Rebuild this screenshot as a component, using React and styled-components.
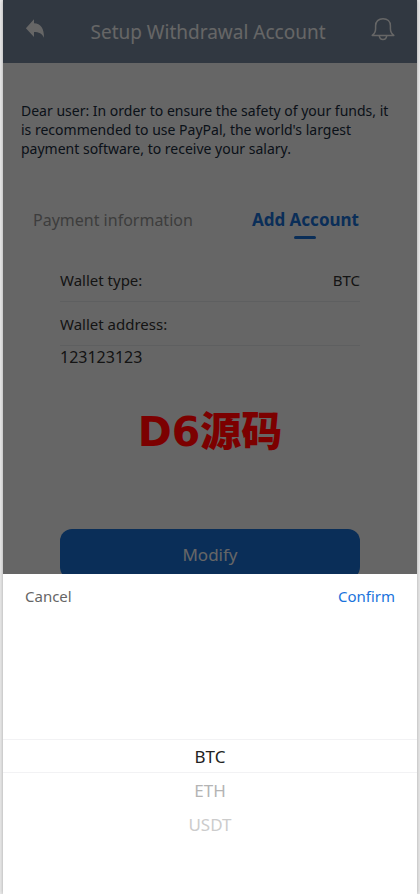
import React, { useState } from 'react';
import styled, { createGlobalStyle } from 'styled-components';

const wallets = ['BTC', 'ETH', 'USDT'];

function App() {
    const [tab, setTab] = useState('add');
    const [wallet, setWallet] = useState('BTC');
    const [address, setAddress] = useState('123123123');

    return (
        <>
            <GlobalStyle />
            <Page>
                <Header>
                    <IconButton aria-label="Back">
                        <svg width="20" height="20" viewBox="0 0 20 20" fill="currentColor">
                            <path d="M9 .3v4c6.8.4 10 4.9 10 14.4-2-4.2-5-5.6-10-5.6v4.9L.9 9.2z" />
                        </svg>
                    </IconButton>
                    <Title>Setup Withdrawal Account</Title>
                    <IconButton aria-label="Notifications">
                        <svg width="24" height="24" viewBox="0 0 24 24" fill="none" stroke="currentColor" strokeWidth="1.5" strokeLinejoin="round">
                            <path d="M1.2 18.4h21.6c-2.4-1.8-3.4-3.9-3.4-6.7V8.8C19.4 4.5 16.4 1.7 12 1.7S4.6 4.5 4.6 8.8v2.9c0 2.8-1 4.9-3.4 6.7z" />
                            <path d="M8.3 18.8c.3 2.4 1.7 3.6 3.7 3.6s3.4-1.2 3.7-3.6" />
                        </svg>
                    </IconButton>
                </Header>
                <Notice>
                    Dear user: In order to ensure the safety of your funds, it is recommended to use PayPal,
                    the world's largest payment software, to receive your salary.
                </Notice>
                <Tabs role="tablist">
                    <Tab role="tab" $active={tab === 'info'} aria-selected={tab === 'info'} onClick={() => setTab('info')}>
                        Payment information
                    </Tab>
                    <Tab role="tab" $active={tab === 'add'} aria-selected={tab === 'add'} onClick={() => setTab('add')}>
                        Add Account
                    </Tab>
                </Tabs>
                <Form onSubmit={(e) => e.preventDefault()}>
                    <Row>
                        <label htmlFor="wallet-type">Wallet type:</label>
                        <TypeButton type="button" id="wallet-type">{wallet}</TypeButton>
                    </Row>
                    <Row>
                        <label htmlFor="wallet-address">Wallet address:</label>
                    </Row>
                    <AddressInput
                        id="wallet-address"
                        value={address}
                        onChange={(e) => setAddress(e.target.value)}
                    />
                    <Submit type="submit">Modify</Submit>
                </Form>
                <Mask />
                <Watermark>D6<span>源码</span></Watermark>
                <Sheet>
                    <Toolbar>
                        <SheetButton>Cancel</SheetButton>
                        <SheetButton $primary>Confirm</SheetButton>
                    </Toolbar>
                    <Picker role="radiogroup" aria-label="Wallet">
                        {wallets.map((name, i) => (
                            <Option key={name} $selected={wallet === name} $far={i === 2}>
                                <input
                                    type="radio"
                                    name="wallet"
                                    checked={wallet === name}
                                    onChange={() => setWallet(name)}
                                />
                                {name}
                            </Option>
                        ))}
                    </Picker>
                </Sheet>
            </Page>
        </>
    );
}

const GlobalStyle = createGlobalStyle`
    * {
        box-sizing: border-box;
    }

    body {
        margin: 0;
        background: #ebebeb;
        font-family: 'Noto Sans', 'Noto Sans CJK SC', sans-serif;
        font-size: 15px;
        color: #333;
    }

    button, input {
        font: inherit;
        color: inherit;
        border: 0;
        padding: 0;
        background: none;
    }
`;

const Page = styled.main`
    position: relative;
    min-height: 100vh;
    margin: 0 3px;
    background: #fff;
    box-shadow: 0 0 4px rgba(0, 0, 0, 0.3);
    overflow: hidden;
`;

const Header = styled.header`
    display: flex;
    align-items: center;
    justify-content: space-between;
    height: 63px;
    padding: 0 22px;
    background: #7a8ca2;
    color: #fff;
`;

const IconButton = styled.button`
    display: flex;
    align-items: center;
    justify-content: center;
    height: 24px;
    margin-bottom: 6px;
`;

const Title = styled.h1`
    margin: 0;
    font-size: 19px;
    font-weight: 400;
`;

const Notice = styled.p`
    margin: 38px 18px 0;
    font-size: 14px;
    line-height: 19px;
    color: #1b2d40;
`;

const Tabs = styled.div`
    display: flex;
    justify-content: space-between;
    margin-top: 42px;
    padding: 0 58px 0 30px;
`;

const Tab = styled.button`
    height: 40px;
    font-size: ${({ $active }) => ($active ? '17px' : '16px')};
    line-height: 38px;
    font-weight: ${({ $active }) => ($active ? 700 : 400)};
    color: ${({ $active }) => ($active ? '#1973dc' : '#999')};

    &::after {
        content: '';
        display: block;
        width: 22px;
        height: 3px;
        margin: -3px auto 0;
        border-radius: 2px;
        background: ${({ $active }) => ($active ? '#1973dc' : 'transparent')};
    }
`;

const Form = styled.form`
    margin: 18px 57px 0;
`;

const Row = styled.div`
    display: flex;
    align-items: center;
    justify-content: space-between;
    height: 44px;
    border-bottom: 1px solid #ebedf0;
`;

const TypeButton = styled.button`
    text-align: right;
`;

const AddressInput = styled.input`
    display: block;
    width: 100%;
    height: 22px;
    font-size: 16px;
`;

const Submit = styled.button`
    display: block;
    width: 100%;
    height: 50px;
    margin-top: 161px;
    border-radius: 12px;
    font-size: 17px;
    background: #1973dc;
    color: #fff;
`;

const Mask = styled.div`
    position: absolute;
    inset: 0;
    background: rgba(0, 0, 0, 0.6);
`;

const Watermark = styled.div`
    position: absolute;
    top: 408px;
    left: 0;
    right: 0;
    display: flex;
    justify-content: center;
    font-family: 'DejaVu Sans', sans-serif;
    font-size: 41px;
    font-weight: 700;
    line-height: 48px;
    color: #7c0000;

    span {
        font-family: 'Noto Sans CJK SC', sans-serif;
        font-weight: 900;
        line-height: 40px;
    }
`;

const Sheet = styled.section`
    position: absolute;
    bottom: 0;
    left: 0;
    right: 0;
    background: #fff;
`;

const Toolbar = styled.div`
    display: flex;
    justify-content: space-between;
    height: 44px;
    padding: 0 22px;
`;

const SheetButton = styled.button`
    color: ${({ $primary }) => ($primary ? '#1973dc' : '#666')};
`;

const Picker = styled.div`
    height: 276px;
    padding-top: 121px;
`;

const Option = styled.label`
    display: flex;
    align-items: center;
    justify-content: center;
    height: 34px;
    border: solid ${({ $selected }) => ($selected ? '#f2f2f4' : 'transparent')};
    border-width: 1px 0;
    font-size: 17px;
    color: ${({ $selected, $far }) => ($selected ? '#222' : $far ? '#ccc' : '#b4b4b4')};

    input {
        appearance: none;
        width: 0;
        margin: 0;
    }
`;

export default App;
